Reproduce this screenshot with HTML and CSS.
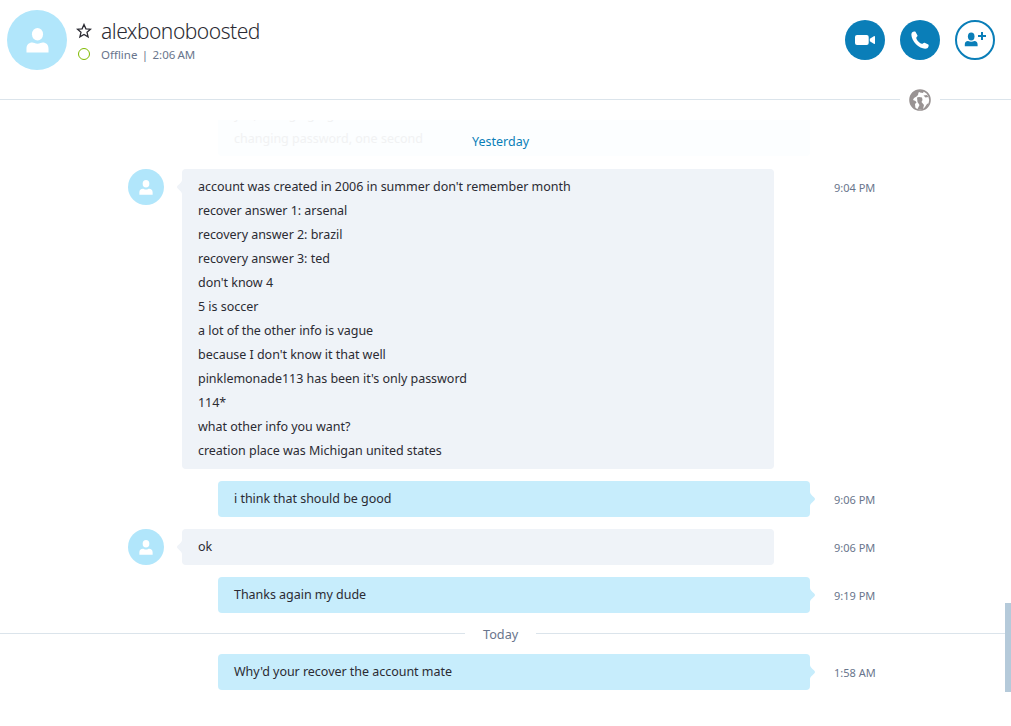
FILE: index.html
```html
<!DOCTYPE html>
<html lang="en">
<head>
  <meta charset="UTF-8">
  <title>alexbonoboosted</title>
  <link rel="stylesheet" href="styles.css">
</head>
<body>
  <svg width="0" height="0" class="defs">
    <symbol id="person" viewBox="0 0 24 26">
      <ellipse cx="12" cy="6.5" rx="5.8" ry="6.5"/>
      <path d="M0.5 25.500V21.500c0-4 2.500-6.300 6-6.300 1.700 0 3 1.300 5.500 1.300s3.800-1.300 5.500-1.300c3.500 0 6 2.300 6 6.300v4z"/>
    </symbol>
    <symbol id="tip" viewBox="0 0 5 14">
      <path d="M0 0c0 3 5 5 5 7s-5 4-5 7z"/>
    </symbol>
  </svg>

  <div class="header">
    <div class="avatar big"><svg><use href="#person"/></svg></div>
    <div class="info">
      <div class="name-row">
        <svg class="star" width="16" height="16" viewBox="0 0 16 16"><path d="M8 1.500l1.900 4.300 4.600.4-3.500 3.100 1.100 4.600L8 11.500l-4.100 2.400L5 9.300 1.500 6.200l4.600-.4z"/></svg>
        <span class="name">alexbonoboosted</span>
      </div>
      <div class="status-row">
        <span class="dot"></span>
        <span class="status">Offline&nbsp; |&nbsp; 2:06 AM</span>
      </div>
    </div>
    <div class="actions">
      <div class="btn"><svg width="20" height="10" viewBox="0 0 20 10"><rect width="13.700" height="10" rx="2"/><path d="M14.800 3.700L18.800 1.200q1.200-.6 1.200.5v6.600q0 1.100-1.200.5L14.800 6.300z"/></svg></div>
      <div class="btn"><svg width="18" height="18" viewBox="0 0 18 18"><path d="M1 1.500C2 .5 4 .3 4.600 1l1.900 3.500c.4 1-1.300 1.600-1.200 2.600.4 2.300 3.100 5.200 5.600 5.700 1 .2 1.700-1.500 2.700-1.100l3.700 1.900c.7.5.4 2.400-.6 3.400-2.700 1.900-8.200-.1-11.700-3.700C1.500 9.800-.8 4.200 1 1.500z"/></svg></div>
      <div class="btn outline"><svg width="22" height="16" viewBox="0 0 22 16"><ellipse cx="7.200" cy="4.500" rx="3.300" ry="4"/><path d="M.8 14.200v-1.700C.8 10.500 2 9 4 9q3.200 1.500 6.400 0c2 0 3.200 1.500 3.200 3.500v1.700zM17 0h2v3h3v2h-3v3h-2V5h-3V3h3z"/></svg></div>
    </div>
  </div>

  <div class="divider top-line">
    <svg class="globe" width="22" height="22" viewBox="0 0 22 22">
      <circle class="rim" cx="11" cy="11" r="10"/>
      <path d="M1 11C1 5 5 1 11 1l1 1.500-2.500 1L9 6 7.500 7.500 5 9l-1 2 2.500 1 1 1.500L6 15l.5 5C3 18 1 15 1 11z"/>
      <path d="M8 8.500l2-.5 3 .5.500 2.500-1 2 2.500 3-1 4H8.500l2-4-2-3zM14.500 6.500l3.500-.5 1.500 2-3 .5zM9.500 1.500L15 2l-1 2-3-.5zM18 15l2-1-3 5-3 2z"/>
    </svg>
  </div>

  <div class="chat">
    <div class="old">
      <div class="old-bubble"><p>yes, changing right</p><p>changing password, one second</p></div>
      <span class="day">Yesterday</span>
    </div>

    <div class="msg in">
      <div class="avatar"><svg><use href="#person"/></svg></div>
      <div class="bubble">
        <svg class="tip"><use href="#tip"/></svg>
        <p>account was created in 2006 in summer don't remember month</p>
        <p>recover answer 1: arsenal</p>
        <p>recovery answer 2: brazil</p>
        <p>recovery answer 3: ted</p>
        <p>don't know 4</p>
        <p>5 is soccer</p>
        <p>a lot of the other info is vague</p>
        <p>because I don't know it that well</p>
        <p>pinklemonade113 has been it's only password</p>
        <p>114*</p>
        <p>what other info you want?</p>
        <p>creation place was Michigan united states</p>
      </div>
      <span class="time">9:04 PM</span>
    </div>
    <div class="msg out">
      <div class="bubble"><svg class="tip"><use href="#tip"/></svg><p>i think that should be good</p></div>
      <span class="time">9:06 PM</span>
    </div>
    <div class="msg in">
      <div class="avatar"><svg><use href="#person"/></svg></div>
      <div class="bubble"><svg class="tip"><use href="#tip"/></svg><p>ok</p></div>
      <span class="time">9:06 PM</span>
    </div>
    <div class="msg out">
      <div class="bubble"><svg class="tip"><use href="#tip"/></svg><p>Thanks again my dude</p></div>
      <span class="time">9:19 PM</span>
    </div>
    <div class="divider today">Today</div>
    <div class="msg out">
      <div class="bubble"><svg class="tip"><use href="#tip"/></svg><p>Why'd your recover the account mate</p></div>
      <span class="time">1:58 AM</span>
    </div>
    <div class="scrollbar"></div>
  </div>
</body>
</html>
```
FILE: styles.css
```css
* { margin: 0; padding: 0; box-sizing: border-box; }
body {
  height: 726px;
  background: #fff;
  color: #2b2b33;
  font-family: "Noto Sans", sans-serif;
  font-size: 12.5px;
  overflow: hidden;
}
.defs { position: absolute; }
.header {
  height: 88px;
  padding: 10px 16px 0 7px;
  display: flex;
}
.avatar {
  width: 36px;
  height: 36px;
  flex: none;
  border-radius: 50%;
  background: #b1e6fb;
  fill: #fff;
  display: flex;
  align-items: center;
  justify-content: center;
}
.avatar svg { width: 14px; height: 15px; }
.avatar.big { width: 60px; height: 60px; }
.avatar.big svg { width: 23px; height: 25px; }
.info { margin-left: 9px; padding-top: 7px; }
.name-row { display: flex; height: 28px; line-height: 28px; }
.star { margin: 6px 9px 0 0; fill: none; stroke: #2b2b33; stroke-width: 1.3; }
.name { font-size: 21px; font-weight: 300; letter-spacing: -0.5px; }
.status-row { display: flex; height: 18px; line-height: 19px; }
.dot {
  width: 12px;
  height: 12px;
  margin: 3px 11px 0 2px;
  border: 1px solid #7fba00;
  border-radius: 50%;
}
.status { font-size: 11.5px; color: #69758c; word-spacing: -0.8px; }
.actions { margin-left: auto; padding-top: 10px; display: flex; gap: 15px; }
.btn {
  width: 40px;
  height: 40px;
  border-radius: 50%;
  background: #0a7eb8;
  fill: #fff;
  display: flex;
  align-items: center;
  justify-content: center;
}
.btn.outline { background: #fff; border: 2px solid #0a7eb8; fill: #0a7eb8; }
.divider { display: flex; align-items: center; color: #69758c; }
.divider::before, .divider::after {
  content: "";
  height: 1px;
  margin-bottom: 2px;
  background: #dbe4eb;
}
.top-line { height: 24px; }
.top-line::before { width: 900px; }
.top-line::after { flex: 1; }
.globe { margin: 0 9px; fill: #999393; }
.globe .rim { fill: #fff; stroke: #999393; stroke-width: 1.6; }
.chat { position: relative; }
.old {
  height: 57px;
  padding: 8px 0 0 218px;
  display: flex;
}
.old-bubble {
  width: 592px;
  height: 36px;
  padding: 0 16px;
  background: #fcfeff;
  color: #f1f2f3;
  border-radius: 0 0 4px 4px;
  display: flex;
  flex-direction: column;
  justify-content: flex-end;
  overflow: hidden;
}
.old-bubble p { flex: none; line-height: 24px; }
.old-bubble p:last-child { margin-bottom: 5px; }
.day { position: absolute; left: 472px; top: 21px; line-height: 18px; color: #0a7eb8; }
.msg { display: flex; margin-bottom: 12px; }
.in { padding-left: 128px; }
.in .bubble { margin-left: 18px; background: #eff3f8; fill: #eff3f8; }
.out { padding-left: 218px; }
.out .bubble { background: #c7edfc; fill: #c7edfc; }
.bubble {
  position: relative;
  width: 592px;
  padding: 6px 16px;
  border-radius: 4px;
}
.bubble p { line-height: 24px; white-space: nowrap; letter-spacing: -0.03px; }
.tip { position: absolute; top: 11px; width: 5px; height: 14px; }
.out .tip { right: -5px; }
.in .tip { left: -5px; transform: scaleX(-1); }
.time {
  height: 36px;
  margin-left: 24px;
  font-size: 11px;
  line-height: 38px;
  color: #69758c;
}
.in .time { margin-left: 60px; }
.today { height: 18px; margin: 1px 0 11px; font-size: 12.7px; }
.today::before { width: 465px; margin-right: 18px; }
.today::after { flex: 1; margin-left: 18px; }
.scrollbar {
  position: absolute;
  right: 0;
  top: 491px;
  width: 6px;
  height: 89px;
  background: #b5cada;
}
```
